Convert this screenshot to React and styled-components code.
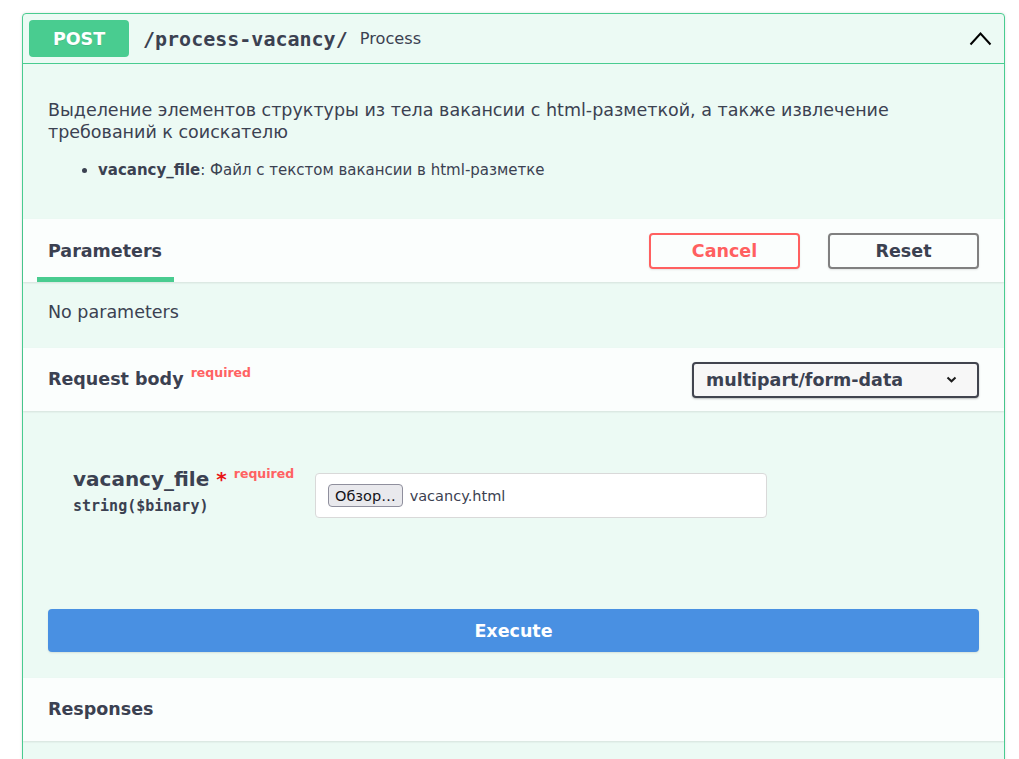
import React from "react"
import styled, { createGlobalStyle } from "styled-components"

const GlobalStyle = createGlobalStyle`
  body {
    margin: 0;
    background: #fff;
    font-family: "DejaVu Sans", "Noto Sans", sans-serif;
    color: #3b4151;
  }
`

function ChevronUp() {
  return (
    <svg width="23" height="15" viewBox="0 0 23 15">
      <polyline points="1.5,13.5 11.5,2.5 21.5,13.5" fill="none" stroke="#000" strokeWidth="2" />
    </svg>
  )
}

function ChevronDown() {
  return (
    <svg width="11" height="7" viewBox="0 0 11 7">
      <polyline points="1.5,1.5 5.5,5.3 9.5,1.5" fill="none" stroke="#1c1c1c" strokeWidth="2" />
    </svg>
  )
}

function App() {
  return (
    <Page>
      <GlobalStyle />
      <Card>
        <Summary>
          <Method>POST</Method>
          <Path>/process-vacancy/</Path>
          <Summ>Process</Summ>
          <Toggle>
            <ChevronUp />
          </Toggle>
        </Summary>

        <Description>
          <p>
            Выделение элементов структуры из тела вакансии с html-разметкой, а также извлечение
            требований к соискателю
          </p>
          <ul>
            <li>
              <b>vacancy_file</b>: Файл с текстом вакансии в html-разметке
            </li>
          </ul>
        </Description>

        <SectionHeader>
          <TabTitle>Parameters</TabTitle>
          <Buttons>
            <OutlineBtn tone="cancel">Cancel</OutlineBtn>
            <OutlineBtn>Reset</OutlineBtn>
          </Buttons>
        </SectionHeader>
        <NoParams>No parameters</NoParams>

        <SectionHeader>
          <Title>
            Request body <Req gap={1}>required</Req>
          </Title>
          <Select>
            multipart/form-data
            <ChevronDown />
          </Select>
        </SectionHeader>

        <Body>
          <ParamRow>
            <NameCol>
              <NameLine>
                vacancy_file<Star>*</Star>
                <Req gap={7}>required</Req>
              </NameLine>
              <TypeLine>string($binary)</TypeLine>
            </NameCol>
            <FileInput>
              <BrowseBtn>Обзор…</BrowseBtn>
              <FileName>vacancy.html</FileName>
            </FileInput>
          </ParamRow>
          <Execute>Execute</Execute>
        </Body>

        <SectionHeader>
          <Title>Responses</Title>
        </SectionHeader>
        <Tail />
      </Card>
    </Page>
  )
}
export default App

const Page = styled.div`
  padding: 13px 0 0 22px;
`
const Card = styled.div`
  width: 983px;
  box-sizing: border-box;
  border: 1px solid #49cc90;
  border-radius: 4px;
  background: rgba(73, 204, 144, 0.1);
  box-shadow: 0 0 3px rgba(0, 0, 0, 0.12);
`
const Summary = styled.div`
  display: flex;
  align-items: center;
  height: 49px;
  padding: 0 12px 0 6px;
  border-bottom: 1px solid #49cc90;
`
const Method = styled.div`
  width: 100px;
  height: 37px;
  display: flex;
  align-items: center;
  justify-content: center;
  background: #49cc90;
  border-radius: 4px;
  color: #fff;
  font-weight: 700;
  font-size: 17.5px;
  text-shadow: 0 1px 0 rgba(0, 0, 0, 0.1);
`
const Path = styled.span`
  margin-left: 14px;
  font-family: "DejaVu Sans Mono", monospace;
  font-weight: 700;
  font-size: 20px;
  color: #3b4151;
`
const Summ = styled.span`
  margin-left: 12px;
  font-size: 16.2px;
  color: #3b4151;
`
const Toggle = styled.div`
  margin-left: auto;
  display: flex;
  align-items: center;
`
const Description = styled.div`
  padding: 35px 25px 38px;
  font-size: 17.5px;
  line-height: 22px;
  p {
    margin: 0;
  }
  ul {
    margin: 16px 0 0;
    padding-left: 50px;
    font-size: 15px;
    line-height: 22px;
  }
`
const SectionHeader = styled.div`
  display: flex;
  align-items: center;
  height: 63px;
  padding: 0 25px;
  background: rgba(255, 255, 255, 0.8);
  box-shadow: 0 1px 2px rgba(0, 0, 0, 0.1);
`
const TabTitle = styled.div`
  position: relative;
  font-size: 17.5px;
  font-weight: 700;
  line-height: 22px;
  &:after {
    content: "";
    position: absolute;
    left: -11px;
    right: -12px;
    bottom: -20px;
    height: 5px;
    background: #49cc90;
  }
`
const Title = styled.div`
  font-size: 17.5px;
  font-weight: 700;
  line-height: 22px;
  margin-top: -1px;
`
const Buttons = styled.div`
  margin-left: auto;
  display: flex;
  gap: 28px;
`
const OutlineBtn = styled.button`
  width: 151px;
  height: 36px;
  box-sizing: border-box;
  background: transparent;
  border: 2px solid ${({ tone }) => (tone === "cancel" ? "#ff6060" : "#808080")};
  color: ${({ tone }) => (tone === "cancel" ? "#ff6060" : "#3b4151")};
  border-radius: 4px;
  font-family: inherit;
  font-weight: 700;
  font-size: 17.5px;
  box-shadow: 0 1px 2px rgba(0, 0, 0, 0.1);
`
const NoParams = styled.div`
  padding: 19px 25px 25px;
  font-size: 17.5px;
  line-height: 22px;
`
const Req = styled.span`
  margin-left: ${({ gap }) => gap}px;
  font-size: 12.5px;
  font-weight: 700;
  line-height: 0;
  color: #ff6262;
  vertical-align: 8px;
`
const Select = styled.div`
  margin-left: auto;
  width: 287px;
  height: 36px;
  box-sizing: border-box;
  display: flex;
  align-items: center;
  justify-content: space-between;
  padding: 0 20px 0 12px;
  border: 2px solid #41444e;
  border-radius: 4px;
  background: #f7f7f7;
  box-shadow: 0 1px 2px rgba(0, 0, 0, 0.25);
  font-size: 17.5px;
  font-weight: 700;
  color: #3b4151;
`
const Body = styled.div`
  padding: 56px 25px 26px;
`
const ParamRow = styled.div`
  display: flex;
  align-items: flex-start;
  padding-left: 25px;
`
const NameCol = styled.div`
  width: 242px;
`
const NameLine = styled.div`
  font-size: 20px;
  font-weight: 700;
  line-height: 24px;
  white-space: nowrap;
`
const Star = styled.span`
  margin-left: 7px;
  color: #e81515;
`
const TypeLine = styled.div`
  margin-top: 6px;
  font-family: "DejaVu Sans Mono", monospace;
  font-weight: 700;
  font-size: 15px;
  line-height: 18px;
  color: #3b4151;
`
const FileInput = styled.div`
  margin-top: 6px;
  width: 452px;
  height: 45px;
  box-sizing: border-box;
  display: flex;
  align-items: center;
  gap: 7px;
  padding: 0 12px;
  background: #fff;
  border: 1px solid #d9d9d9;
  border-radius: 4px;
`
const BrowseBtn = styled.span`
  display: flex;
  align-items: center;
  height: 23px;
  box-sizing: border-box;
  padding: 0 6px;
  background: #e9e9ed;
  border: 1px solid #8f8f9d;
  border-radius: 4px;
  font-size: 14.5px;
  color: #15141a;
`
const FileName = styled.span`
  font-size: 14.5px;
  color: #3b4151;
`
const Execute = styled.button`
  display: block;
  width: 100%;
  height: 43px;
  margin-top: 91px;
  border: none;
  border-radius: 4px;
  background: #4990e2;
  color: #fff;
  font-family: inherit;
  font-weight: 700;
  font-size: 17.5px;
  box-shadow: 0 1px 2px rgba(0, 0, 0, 0.1);
`
const Tail = styled.div`
  height: 60px;
`
